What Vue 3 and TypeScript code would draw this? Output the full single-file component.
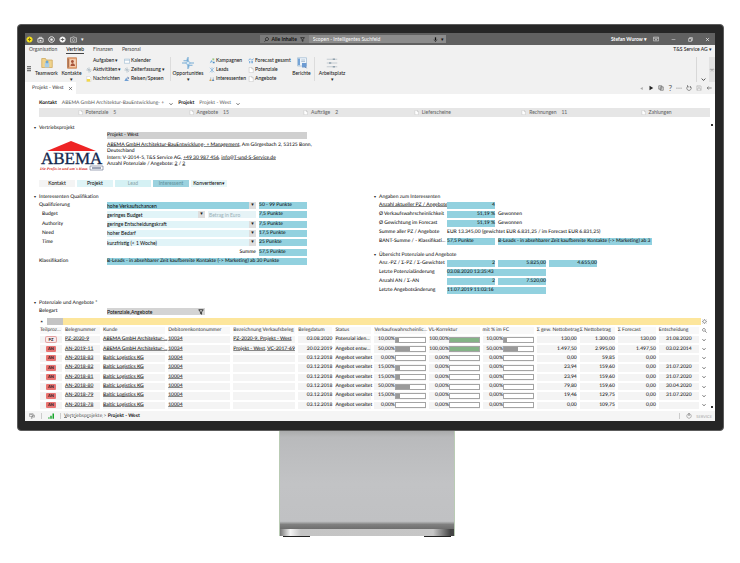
<script setup lang="ts">
import { h, ref } from 'vue'

type Shape = [d: string, fill: string, stroke?: string, width?: number]

const shapes: Record<string, Shape[]> = {
  coin: [['M8 1a7 7 0 1 0 .1 0z', '#f7e21a'], ['M8 4v8M4.500 8h7', 'none', '#7a6a10', 2]],
  bag: [['M2 6h12v8H2zM5 6V3h6v3', 'none', '#ececec', 2], ['M6 9h4v3H6z', '#ececec']],
  target: [['M8 1.500a6.500 6.500 0 1 0 .1 0z', 'none', '#f0f0f0', 2], ['M8 5a3 3 0 1 0 .1 0z', '#f0f0f0']],
  globe: [['M8 1a7 7 0 1 0 .1 0z', '#f5f5f5'], ['M4 8h8M8 5v6', 'none', '#555', 2]],
  camera: [['M1 4h4l1-2h4l1 2h4v10H1z', 'none', '#ddd', 1.5], ['M8 6a3 3 0 1 0 .1 0z', 'none', '#ddd', 1.5]],
  search: [['M9.500 1.500a5 5 0 1 0 .1 0zM6 10l-4.500 5', 'none', 'currentColor', 2]],
  filter: [['M2 2h12L9.500 8v6l-3-2V8z', 'none', 'currentColor', 2]],
  mic: [['M6 1h4v9H6z', 'currentColor'], ['M3 8c0 6 10 6 10 0M8 12v4', 'none', 'currentColor', 1.5]],
  windowed: [['M1 3h14v10H1zM1 6h14M8 12V8M6 10l2-2 2 2', 'none', '#e5e5e5', 1.5]],
  minimize: [['M2 8h12', 'none', '#eee', 1.5]],
  restore: [['M2 5h9v9H2zM5 5V2h9v9h-3', 'none', '#eee', 2]],
  close: [['M3 3l10 10M13 3L3 13', 'none', 'currentColor', 2]],
  folder: [['M1 2h5l1 2h8v10H1z', '#f0d38c', '#cda558', 1], ['M5 8h6v6H5z', '#a8cde8'], ['M8 4.500a2 2 0 1 0 .1 0z', '#69a7d5']],
  contacts: [['M2 1h12v14H2z', '#e9a87a', '#c47c4e', 1], ['M5 3h8v10H5z', '#f5d7bd'], ['M8.500 4a2 2 0 1 0 .1 0zM6 12c0-5 6-5 6 0z', '#a7543a'], ['M3 2v12', 'none', '#7e4b35', 1]],
  calendar: [['M1 3h14v11H1zM1 6h14', '#fff', '#8eb1cb', 1.5]],
  gearPlus: [['M8 1v14M1 8h14M3 3l10 10', 'none', '#9aabb8', 1.5], ['M8 6a2 2 0 1 0 .1 0z', '#fff', '#7d97aa', 1]],
  note: [['M2 1h7l4 4v10H2z', '#fff', '#bbb', 1], ['M2 8h9v7H2z', '#f4d847']],
  plane: [['M1 13l5-9 3 6 5 3z', '#6f9fd4'], ['M9 1l5 4-4 4z', '#5a78a8']],
  flower: [['M8 0v16M0 8h16M2 5h5V2M14 11H9v3', 'none', '#78add6', 1.6], ['M8 5.500a2.500 2.500 0 1 0 .1 0z', '#d9ebf7', '#78add6', 1]],
  campaign: [['M2 14l4-9 4 4z', '#7ab3df'], ['M9 1h5v5H9z', '#9cc985'], ['M10 10h5v4h-5z', '#4c8ac0']],
  leads: [['M2 2l12 12M14 2L2 14M8 1v14', 'none', '#7fb1db', 1.7]],
  people: [['M1 13c0-6 6-6 6 0z', '#d0a458'], ['M8 13c0-6 6-6 6 0z', '#5f89b8'], ['M3 4h3v3H3zM10 4h3v3h-3z', '#a8b9c8']],
  chart: [['M1 6l5-4 4 4 5-4', 'none', '#5b9bd5', 2], ['M3 8h3v6H3zM9 8h4v6H9z', '#76aadb']],
  page: [['M3 1h7l4 4v10H3zM10 1v4h4', '#fff', '#aaa', 1]],
  report: [['M2 1h12v11H2z', '#eef4fa', '#a4bdd4', 1], ['M3 2h2v9H3z', '#4d8acb'], ['M7 4h5M7 6h5', 'none', '#9db4c9', 1], ['M8 8h6v6H8z', '#6c9bd2'], ['M12 13l2 2', 'none', '#4d6c95', 1]],
  sliders: [['M1 3h14M1 8h14M1 13h14', 'none', '#b4bec5', 1], ['M9 2h3v2H9zM4 7h3v2H4zM9 12h3v2H9z', '#91a2ae']],
  prev: [['M12 3v10L4 8z', '#aaa']],
  next: [['M4 2v12l10-6z', '#222']],
  copy: [['M2 2h8v9H2zM6 5h8v9H6z', '#f1f1f1', '#555', 1.6]],
  dots: [['M1 7h3v2H1zM6.500 7h3v2h-3zM12 7h3v2h-3z', '#777']],
  refresh: [['M4 4a6 6 0 1 0 8 0M4 0v5h5M12 8V3', 'none', '#555', 1.6]],
  save: [['M2 2h10l2 2v10H2zM5 2v4h6V2M4 14V9h8v5', 'none', '#b5b5b5', 1.5]],
  back: [['M15 8H3M7 4L3 8l4 4', 'none', '#666', 2]],
  gear: [['M8 3a5 5 0 1 0 .1 0z', 'none', '#666', 2], ['M8 0v3M8 13v3M0 8h3M13 8h3M2 2l2 2M12 12l2 2M14 2l-2 2M4 12l-2 2', 'none', '#666', 1.5]],
  zoom: [['M6 1.500a4.500 4.500 0 1 0 .1 0zM9.500 9.500L15 15', 'none', '#555', 2]],
  plug: [['M1 2h10v7H1zM3 4h6M9 6h6v5H9zM7 9v5M5 14h4', 'none', '#777', 1.5]],
  signal: [['M1 11h3v4H1zM6 7h4v8H6zM12 1h4v14h-4z', '#18a52b']],
  power: [['M8 2a6 6 0 1 0 .1 0z', 'none', '#888', 1.6], ['M8 0v8', 'none', '#666', 2]],
  collapse: [['M2 7h12M5 4l3 3 3-3M5 12l3-3 3 3', 'none', '#888', 1.4]],
  down: [['M2 5l6 6 6-6', 'none', 'currentColor', 2.5]],
}

const Icon = (props: { name: string }) =>
  h(
    'svg',
    { viewBox: '0 0 16 16', 'aria-hidden': 'true' },
    (shapes[props.name] ?? []).map(([d, fill, stroke, width]) =>
      h('path', { d, fill, stroke: stroke ?? 'none', 'stroke-width': width ?? 0 }),
    ),
  )
Icon.props = ['name']

const quickActions = ['coin', 'bag', 'target', 'globe', 'camera']
const ribbonTabs = ['Organisation', 'Vertrieb', 'Finanzen', 'Personal']
const activeTab = ref('Vertrieb')

type Command = { text: string; icon?: string; menu?: boolean }
const dayCommands: Command[] = [
  { text: 'Aufgaben', menu: true },
  { text: 'Aktivitäten', icon: 'gearPlus', menu: true },
  { text: 'Nachrichten', icon: 'note' },
]
const timeCommands: Command[] = [
  { text: 'Kalender', icon: 'calendar' },
  { text: 'Zeiterfassung', icon: 'gearPlus', menu: true },
  { text: 'Reisen/Spesen', icon: 'plane' },
]
const marketingCommands: Command[] = [
  { text: 'Kampagnen', icon: 'campaign' },
  { text: 'Leads', icon: 'leads' },
  { text: 'Interessenten', icon: 'people' },
]
const salesCommands: Command[] = [
  { text: 'Forecast gesamt', icon: 'chart' },
  { text: 'Potenziale', icon: 'page' },
  { text: 'Angebote', icon: 'page' },
]
const groups = [
  { key: 'day', items: dayCommands },
  { key: 'time', items: timeCommands },
]
const salesGroups = [
  { key: 'marketing', items: marketingCommands },
  { key: 'sales', items: salesCommands },
]

const stages = [
  { name: 'Potenziale', count: '5' },
  { name: 'Angebote', count: '15' },
  { name: 'Aufträge', count: '2' },
  { name: 'Lieferscheine', count: '' },
  { name: 'Rechnungen', count: '11' },
  { name: 'Zahlungen', count: '' },
]

const bant = ref([
  { id: 'authority', label: 'Authority', value: 'geringe Entscheidungskraft', points: '7,5 Punkte' },
  { id: 'need', label: 'Need', value: 'hoher Bedarf', points: '17,5 Punkte' },
  { id: 'time', label: 'Time', value: 'kurzfristig (< 1 Woche)', points: '25 Punkte' },
])

const columns = [
  { name: 'Teilproz...', w: 22 },
  { name: 'Belegnummer', w: 35 },
  { name: 'Kunde', w: 62 },
  { name: 'Debitorenkontonummer', w: 62 },
  { name: 'Bezeichnung Verkaufsbeleg', w: 62 },
  { name: 'Belegdatum', w: 34 },
  { name: 'Status', w: 36 },
  { name: 'Verkaufswahrscheinlic...', w: 51 },
  { name: 'VL-Korrektur', w: 51 },
  { name: 'mit % im FC', w: 51 },
  { name: 'Σ gew. Nettobetrag', w: 40 },
  { name: 'Σ Nettobetrag', w: 35 },
  { name: 'Σ Forecast', w: 38 },
  { name: 'Entscheidung', w: 40 },
]
const totalWidth = 627

type Row = {
  kind: string; no: string; customer: string; account: string; title: string; date: string; status: string
  chance: number; fix: number; forecastPart: number; weighted: string; net: string; forecast: string; decision: string
}
const row = (
  kind: string, no: string, customer: string, account: string, title: string, date: string, status: string,
  chance: number, fix: number, forecastPart: number, weighted: string, net: string, forecast: string, decision: string,
): Row => ({ kind, no, customer, account, title, date, status, chance, fix, forecastPart, weighted, net, forecast, decision })

const abema = 'ABEMA GmbH Architektur-...'
const baltic = 'Baltic Logistics KG'
const rows: Row[] = [
  row('PZ', 'PZ-2020-9', abema, '10034', 'PZ-2020-9, Projekt - West', '03.08.2020', 'Potenzial iden...', 10, 100, 10, '130,00', '1.300,00', '130,00', '31.08.2020'),
  row('AN', 'AN-2019-11', abema, '10034', 'Projekt - West, VC-2017-69', '20.02.2019', 'Angebot entw...', 50, 100, 50, '1.497,50', '2.995,00', '1.497,50', '03.02.2014'),
  row('AN', 'AN-2018-83', baltic, '10004', '', '03.12.2018', 'Angebot veraltet', 0, 0, 0, '0,00', '59,85', '0,00', ''),
  row('AN', 'AN-2018-82', baltic, '10004', '', '03.12.2018', 'Angebot veraltet', 15, 0, 0, '23,94', '159,60', '0,00', '31.07.2020'),
  row('AN', 'AN-2018-81', baltic, '10004', '', '03.12.2018', 'Angebot veraltet', 15, 0, 0, '23,94', '159,60', '0,00', '31.07.2020'),
  row('AN', 'AN-2018-80', baltic, '10004', '', '03.12.2018', 'Angebot veraltet', 50, 0, 0, '79,80', '159,60', '0,00', '30.04.2020'),
  row('AN', 'AN-2018-79', baltic, '10004', '', '03.12.2018', 'Angebot veraltet', 15, 0, 0, '19,46', '129,75', '0,00', '31.07.2020'),
  row('AN', 'AN-2018-78', baltic, '10004', '', '03.12.2018', 'Angebot veraltet', 0, 0, 0, '0,00', '109,75', '0,00', ''),
]
const gauges = (r: Row) => [r.chance, r.fix, r.forecastPart]
</script>

<template>
  <div class="stage">
    <div class="monitor">
      <div class="screen">
        <header class="titlebar">
          <div class="quick">
            <button v-for="q in quickActions" :key="q" :aria-label="q"><Icon :name="q" class="ic7" /></button>
            <button class="light" aria-label="Mehr">▾</button>
          </div>
          <div class="search">
            <button class="scope"><Icon name="search" class="ic5" />Alle Inhalte<Icon name="filter" class="ic5" /></button>
            <input aria-label="Suche" placeholder="Scopen - Intelligentes Suchfeld" />
            <button aria-label="Sprache"><Icon name="mic" class="ic5" /></button>
            <button aria-label="Suchoptionen">▾</button>
          </div>
          <div class="window">
            <button class="light">Stefan Wurow ▾</button>
            <button aria-label="Ansicht"><Icon name="windowed" class="ic6" /></button>
            <button aria-label="Minimieren"><Icon name="minimize" class="ic5" /></button>
            <button aria-label="Wiederherstellen"><Icon name="restore" class="ic5" /></button>
            <button class="light" aria-label="Schließen"><Icon name="close" class="ic5" /></button>
          </div>
        </header>

        <div class="ribbon">
          <nav class="tabs">
            <button v-for="t in ribbonTabs" :key="t" :class="{ active: t === activeTab }" @click="activeTab = t">{{ t }}</button>
            <button class="company">T&amp;S Service AG ▾</button>
          </nav>
          <div class="commands">
            <button class="handle" aria-label="Navigation"></button>
            <button class="big"><Icon name="folder" class="ic12" />Teamwork</button>
            <button class="big"><Icon name="contacts" class="ic12" />Kontakte<i>▾</i></button>
            <div v-for="g in groups" :key="g.key" class="group" :class="g.key">
              <button v-for="c in g.items" :key="c.text">
                <Icon :name="c.icon ?? ''" class="ic6" />{{ c.text }}<span v-if="c.menu">▾</span>
              </button>
            </div>
            <hr />
            <button class="big wide"><Icon name="flower" class="ic12" />Opportunities<i>▾</i></button>
            <div v-for="g in salesGroups" :key="g.key" class="group" :class="g.key">
              <button v-for="c in g.items" :key="c.text"><Icon :name="c.icon ?? ''" class="ic6" />{{ c.text }}</button>
            </div>
            <button class="big"><Icon name="report" class="ic12" />Berichte</button>
            <hr />
            <button class="big wide"><Icon name="sliders" class="ic12" />Arbeitsplatz<i>▾</i></button>
            <div class="ribbon-end">
              <button class="more" aria-label="Mehr Befehle"><Icon name="down" class="ic5" /></button>
              <button class="pin" aria-label="Menüband einklappen"><Icon name="collapse" class="ic6" /></button>
            </div>
          </div>
          <div class="docbar">
            <div class="doctab">Projekt - West<button aria-label="Tab schließen"><Icon name="close" class="ic5" /></button></div>
            <div class="doctools">
              <button aria-label="Zurück"><Icon name="prev" class="ic5" /></button>
              <button aria-label="Vor"><Icon name="next" class="ic6" /></button>
              <button aria-label="Kopieren"><Icon name="copy" class="ic6" /></button>
              <button class="help" aria-label="Hilfe">?</button>
              <button aria-label="Mehr"><Icon name="dots" class="ic6" /></button>
              <button aria-label="Aktualisieren"><Icon name="refresh" class="ic6" /></button>
              <button aria-label="Speichern"><Icon name="save" class="ic6" /></button>
              <button aria-label="Schließen"><Icon name="back" class="ic6" /></button>
            </div>
          </div>
        </div>

        <main>
          <div class="scroll"><i></i><i></i></div>
          <div class="context">
            <b>Kontakt</b><span class="muted">ABEMA GmbH Architektur-BauEntwicklung- +</span><Icon name="down" class="ic4" />
            <b>Projekt</b><span class="muted">Projekt - West</span><Icon name="down" class="ic4" />
          </div>
          <div class="stages">
            <button v-for="s in stages" :key="s.name"><Icon name="page" class="ic5" />{{ s.name }}<span v-if="s.count">{{ s.count }}</span></button>
          </div>

          <h2>Vertriebsprojekt</h2>
          <section class="project">
            <svg class="logo" viewBox="0 0 66 32" role="img" aria-label="ABEMA">
              <path d="M8 11L32 1l25 10z" fill="#ee2425" />
              <text x="2" y="24" class="brand">ABEMA</text>
              <text x="1" y="30" class="claim">Die Profis in und um´s Haus</text>
              <path d="M51 26h13v4H51z" fill="#fff" stroke="#3d4b6e" stroke-width=".5" />
              <path d="M53 28h9" stroke="#3d4b6e" />
            </svg>
            <div class="about">
              <div class="name">Projekt - West</div>
              <p><a href="#kontakt">ABEMA GmbH Architektur-BauEntwicklung- + Management</a>, Am Görgesbach 2, 53125 Bonn,<br />Deutschland</p>
              <p>Intern: V-2014-5, T&amp;S Service AG, <a href="#tel">+49 30 987 456</a>, <a href="#mail">info@T-und-S-Service.de</a><br />Anzahl Potenziale / Angebote: <a href="#pz">2</a> / <a href="#an">2</a></p>
            </div>
          </section>
          <div class="steps">
            <button class="s1">Kontakt</button><button class="s2">Projekt</button><button class="s3">Lead</button>
            <button class="s4">Interessent</button><button class="s5">Konvertieren▾</button>
          </div>

          <div class="columns">
            <section>
              <h2>Interessenten Qualifikation</h2>
              <div class="form">
                <div class="line">
                  <label for="quali">Qualifizierung</label>
                  <span class="pick strong"><select id="quali"><option>hohe Verkaufschancen</option></select></span>
                  <output>50 - 99 Punkte</output>
                </div>
                <div class="line sub">
                  <label for="budget">Budget</label>
                  <span class="pair">
                    <span class="pick"><select id="budget"><option>geringes Budget</option></select></span>
                    <input aria-label="Betrag in Euro" placeholder="Betrag in Euro" />
                  </span>
                  <output>7,5 Punkte</output>
                </div>
                <div v-for="b in bant" :key="b.id" class="line sub">
                  <label :for="b.id">{{ b.label }}</label>
                  <span class="pick"><select :id="b.id"><option>{{ b.value }}</option></select></span>
                  <output>{{ b.points }}</output>
                </div>
                <div class="line"><span></span><span class="sum">Summe</span><output>57,5 Punkte</output></div>
                <div class="line full"><span>Klassifikation</span><output>B-Leads - in absehbarer Zeit kaufbereite Kontakte (-&gt; Marketing) ab 30 Punkte</output></div>
              </div>
            </section>
            <section class="facts">
              <h2>Angaben zum Interessenten</h2>
              <div class="fact"><a href="#aktuell">Anzahl aktueller PZ / Angebote</a><output class="num">4</output></div>
              <div class="fact"><span>Ø Verkaufswahrscheinlichkeit</span><output class="num">51,19 %</output><span>Gewonnen</span></div>
              <div class="fact"><span>Ø Gewichtung im Forecast</span><output class="num">51,19 %</output><span>Gewonnen</span></div>
              <div class="fact"><span>Summe aller PZ / Angebote</span><span class="rest">EUR 13.345,00 (gewichtet EUR 6.831,25 / im Forecast EUR 6.831,25)</span></div>
              <div class="fact"><span>BANT-Summe / - Klassifikati...</span><output>57,5 Punkte</output><output class="long">B-Leads - in absehbarer Zeit kaufbereite Kontakte (-&gt; Marketing) ab 3</output></div>
              <h2 class="second">Übersicht Potenziale und Angebote</h2>
              <div class="fact"><span>Anz.-PZ / Σ-PZ / Σ-Gewichtet</span><output class="num">2</output><output class="num">5.825,00</output><output class="num">4.655,00</output></div>
              <div class="fact"><span>Letzte Potenzialänderung</span><output class="double">03.08.2020 13:35:43</output></div>
              <div class="fact"><span>Anzahl AN / Σ-AN</span><output class="num">2</output><output class="num">7.520,00</output></div>
              <div class="fact"><span>Letzte Angebotsänderung</span><output class="double">11.07.2019 11:03:16</output></div>
            </section>
          </div>

          <h2 class="docs-title">Potenziale und Angebote *</h2>
          <div class="filter">
            <label for="belegart">Belegart</label>
            <span class="filterbox"><input id="belegart" value="Potenziale,Angebote" /><Icon name="filter" class="ic6" /></span>
          </div>
          <div class="yellow"><span>✶</span><i></i><b></b><Icon name="gear" class="ic5" /></div>
          <table>
            <colgroup>
              <col v-for="c in columns" :key="c.name" :style="{ width: (c.w / totalWidth) * 100 + '%' }" />
              <col />
            </colgroup>
            <thead>
              <tr>
                <th v-for="c in columns" :key="c.name" scope="col">{{ c.name }}</th>
                <th class="tail"><Icon name="zoom" class="ic5" /></th>
              </tr>
            </thead>
            <tbody>
              <tr v-for="r in rows" :key="r.no">
                <td class="tagcell"><span class="tag" :class="{ open: r.kind === 'PZ' }">{{ r.kind }}</span></td>
                <td><a href="#beleg">{{ r.no }}</a></td>
                <td><a href="#kunde">{{ r.customer }}</a></td>
                <td><a href="#konto">{{ r.account }}</a></td>
                <td><a v-if="r.title" href="#titel">{{ r.title }}</a></td>
                <td class="num">{{ r.date }}</td>
                <td>{{ r.status }}</td>
                <td v-for="(g, i) in gauges(r)" :key="i" class="gauge">
                  <div><span>{{ g }},00%</span><em :class="{ green: g === 100 }"><i :style="{ width: g + '%' }"></i></em></div>
                </td>
                <td class="num">{{ r.weighted }}</td>
                <td class="num">{{ r.net }}</td>
                <td class="num">{{ r.forecast }}</td>
                <td class="mid">{{ r.decision }}</td>
                <td class="tail"><Icon name="down" class="ic4" /></td>
              </tr>
            </tbody>
          </table>
        </main>

        <footer>
          <Icon name="plug" class="ic6" /><s></s><Icon name="signal" class="ic6" /><s></s>
          <span class="crumbs"><a href="#projekte">Vertriebsprojekte</a> &gt; <strong>Projekt - West</strong></span>
          <s class="push"></s><Icon name="power" class="ic6" /><small>SERVICE</small>
        </footer>
      </div>
    </div>
    <div class="stand"><div class="foot"></div></div>
    <div class="pads"><i></i><i></i></div>
  </div>
</template>

<style>
body { background: #fff; }
</style>

<style scoped>
* { box-sizing: border-box; margin: 0; padding: 0; }
.stage { padding: 24px 16px 24px 17px; font: 500 5px/7px Lato, 'Noto Sans', sans-serif; color: #111; text-rendering: geometricPrecision; }
button, input, select { font: inherit; color: inherit; background: none; border: 0; border-radius: 0; appearance: none; min-width: 0; white-space: nowrap; }
button { display: flex; align-items: center; gap: 1px; }
input, select { height: 7px; line-height: 6px; outline: 0; }
a { color: inherit; text-decoration: underline; text-decoration-thickness: 1px; text-underline-offset: 0; text-decoration-color: #888; }
svg { display: block; flex: none; }
.ic4 { width: 4px; height: 4px; }
.ic5 { width: 5px; height: 5px; }
.ic6 { width: 6px; height: 6px; }
.ic7 { width: 7px; height: 7px; }
.ic12 { width: 12px; height: 12px; }
.monitor { background: #262626; border: 1px solid #5c5c5c; border-radius: 4px; padding: 8px 8px 9px 7px; }
.screen { background: #fff; display: flex; flex-direction: column; }

.titlebar { height: 12px; background: #616161; display: grid; grid-template-columns: 34% 27% 1fr; align-items: center; color: #fff; }
.quick { display: flex; gap: 4px; padding-left: 1px; align-items: center; }
.light { color: #fff; }
.search { display: flex; height: 8px; align-items: center; background: #8c8c8c; }
.search button { color: #111; width: 7px; justify-content: center; }
.search .scope { width: auto; height: 8px; padding: 0 4px; gap: 3px; background: #7b7b7b; }
.search input { flex: 1; padding-left: 4px; color: #fff; }
.search input::placeholder { color: #f3f3f3; opacity: 1; }
.window { display: flex; justify-content: flex-end; gap: 12px; padding-right: 5px; align-items: center; }
.window button:first-child { margin-right: -6px; }
.window button:first-child, .scope { font-weight: 700; }

.ribbon { background: #f1f1f1; }
.tabs { display: flex; height: 12px; padding-left: 4px; gap: 9px; align-items: flex-start; }
.tabs button { height: 9px; color: #555; border-bottom: 1px solid transparent; }
.tabs .active { color: #111; border-color: #444; }
.tabs .company { margin-left: auto; padding-right: 3px; color: #222; }
.commands { display: flex; height: 25px; align-items: flex-start; }
.commands button { color: #222; }
.commands .handle { width: 4px; height: 6px; margin: 9px 3px 0 2px; background: repeating-linear-gradient(#777 0 1px, #ccc 1px 2px); }
.commands .big { flex-direction: column; width: 25px; gap: 1px; line-height: 6px; }
.commands .big.wide { width: 34px; }
.big i { font-style: normal; line-height: 4px; }
.group { display: flex; flex-direction: column; gap: 2px; }
.group button { height: 7px; }
.day { width: 38px; margin-left: 2px; }
.time { width: 46px; }
.marketing { width: 39px; margin-left: 4px; }
.sales { width: 41px; }
.commands hr { width: 1px; height: 24px; border: 0; background: #dcdcdc; }
.ribbon-end { margin-left: auto; display: flex; height: 25px; border-left: 1px solid #d8d8d8; }
.ribbon-end .more { width: 12px; justify-content: center; align-items: flex-end; }
.ribbon-end .pin { width: 6px; background: #e2e2e2; }
.docbar { display: flex; justify-content: space-between; height: 12px; }
.doctab { display: flex; gap: 4px; align-items: center; padding: 0 3px 0 7px; background: #fff; color: #444; }
.doctab button { margin-left: auto; }
.doctools { display: flex; align-items: center; gap: 4px; padding-right: 3px; }
.doctools .help { font-size: 8px; color: #666; }

main { position: relative; padding: 0 3px 0 14px; }
.scroll { position: absolute; top: 30px; right: 2px; bottom: 3px; width: 2px; display: flex; flex-direction: column; justify-content: space-between; }
.scroll i { height: 2px; background: #333; }
main h2 { font-size: 5px; font-weight: 500; line-height: 8px; color: #222; display: flex; align-items: center; }
main h2::before { content: '▾'; width: 5px; margin-left: -5px; font-size: 4px; }
.context { display: flex; gap: 5px; padding-top: 6px; height: 14px; }
.context svg { margin-top: 2px; }
.muted { color: #666; }
.stages { display: grid; grid-template-columns: repeat(6, 1fr); height: 9px; background: #e6e6e6; margin-right: 2px; }
.stages button { justify-content: center; color: #666; gap: 3px; padding-left: 4px; }
.stages span { margin-left: 2px; }
.stages + h2 { margin-top: 7px; }
.project { display: grid; grid-template-columns: 68px minmax(0, 200px); height: 44px; }
.logo { width: 66px; height: 32px; margin-top: 8px; }
.brand { font: 17px 'Liberation Serif', serif; fill: #16294f; stroke: #16294f; stroke-width: .3px; }
.claim { font: italic 700 4px 'Liberation Serif', serif; fill: #d8302b; }
.name { background: #d0d0d0; height: 7px; margin-bottom: 3px; }
.about p { line-height: 6px; white-space: nowrap; }
.about p + p { margin-top: 1px; }
.steps { display: flex; gap: 2px; padding-top: 4px; }
.steps button { width: 36px; height: 7px; justify-content: center; }
.s1 { background: #f4f4f4; }
.s2 { background: #dff4f7; }
.s3 { background: #d5f1f4; }
.steps .s3 { color: #8ba9ad; }
.s4 { background: #9bd2df; }
.steps .s4 { color: #6394a0; }
.s5 { background: #e8f7f8; }

.columns { display: grid; grid-template-columns: 340fr 333fr; padding-top: 6px; height: 112px; }
.form { display: flex; flex-direction: column; height: 65px; }
.line { flex: 1; display: grid; grid-template-columns: 65px minmax(0, 149px) minmax(0, 48px); gap: 3px; align-items: center; }
.sub label { padding-left: 3px; }
.full { grid-template-columns: 65px minmax(0, 200px); }
.pick { display: flex; position: relative; background: #e1f4f8; height: 7px; min-width: 0; }
.pick select { flex: 1; padding-right: 8px; }
.pick::after { content: '▾'; position: absolute; right: 0; top: 0; width: 7px; height: 7px; background: #dedede; text-align: center; pointer-events: none; }
.strong { background: #92d1df; }
.pair { display: grid; grid-template-columns: 98px minmax(0, 1fr); gap: 3px; }
.pair input { background: #e6f3f6; padding-left: 1px; }
.pair input::placeholder { color: #9fb4ba; opacity: 1; }
output { display: block; background: #92d1df; height: 7px; line-height: 6px; white-space: nowrap; }
.sum { text-align: right; }
.fact { display: grid; grid-template-columns: 65px repeat(3, 48px) minmax(0, 52px); column-gap: 3px; height: 9px; align-items: center; white-space: nowrap; }
.fact .num, td.num { text-align: right; }
.fact .rest { grid-column: 2 / -1; }
.fact .long { grid-column: 3 / 6; }
.fact .double { grid-column: 2 / 4; }
.second { margin-top: 5px; }

.filter { display: grid; grid-template-columns: 68px minmax(0, 98px); padding-top: 1px; margin-bottom: 3px; }
.filterbox { display: flex; align-items: center; background: #d4d4d4; padding-right: 1px; }
.filterbox input { flex: 1; }
.yellow { display: grid; grid-template-columns: 8px 16px 1fr 11px; height: 7px; align-items: center; }
.yellow span { font-size: 4px; padding-left: 1px; }
.yellow i { height: 7px; background: #c4c4c4; }
.yellow b { height: 7px; background: #fde69c; }
.yellow svg { margin-left: 1px; }
table { width: calc(100% + 3px); margin: 0 -1px 0 -2px; height: 86px; table-layout: fixed; border-collapse: separate; border-spacing: 3px 2px; }
th, td { height: 7px; line-height: 7px; text-align: left; font-weight: 500; white-space: nowrap; background: #f4f4f4; vertical-align: middle; }
th { color: #444; background: #f8f8f8; }
th.tail, td.tail { background: none; }
.tagcell, .mid { text-align: center; }
.tag { display: block; width: 10px; height: 6px; margin: 0 auto; line-height: 6px; font-size: 4px; font-weight: 700; text-align: center; border-radius: 1px; background: #e87473; }
.tag.open { background: #fbeaea; box-shadow: 0 0 0 1px #e2a3a3; height: 5px; line-height: 5px; }
.gauge div { display: grid; grid-template-columns: 1fr 60%; align-items: center; gap: 0; }
.gauge span { text-align: right; }
.gauge em { display: block; height: 6px; border: 1px solid #a4a4a4; background: #fff; }
.gauge em i { display: block; height: 4px; background: #9a9a9a; }
.gauge .green i { background: #84b387; }

footer { display: flex; align-items: center; gap: 4px; height: 10px; padding: 0 3px 0 4px; background: #f5f5f5; color: #666; }
footer s { width: 1px; height: 6px; background: #ccc; margin: 0 2px; }
footer .push { margin-left: auto; }
footer strong { font-weight: 700; color: #111; }
footer small { font-size: 4px; color: #aaa; }
.crumbs { margin-left: -3px; }

.stand { width: 25%; height: 105px; margin: 0 auto 0 37%; border: solid #b9cbb4; border-width: 0 1px; background: linear-gradient(#aaabac, #b9babc 6%, #c2c3c5 50%, #c0c1c3 86%, #808080 89%, #6f6f6f 93%); }
.stand { display: flex; align-items: flex-end; }
.foot { width: 100%; height: 7px; background: linear-gradient(90deg, #777, #f5f5f5 6%, #c4c4c4 12%, #c6c6c6 88%, #444 98%); }
.pads { width: 25%; margin-left: 37%; padding: 0 4px; display: flex; justify-content: space-between; }
.pads i { width: 27px; height: 1px; background: #222; }
</style>
